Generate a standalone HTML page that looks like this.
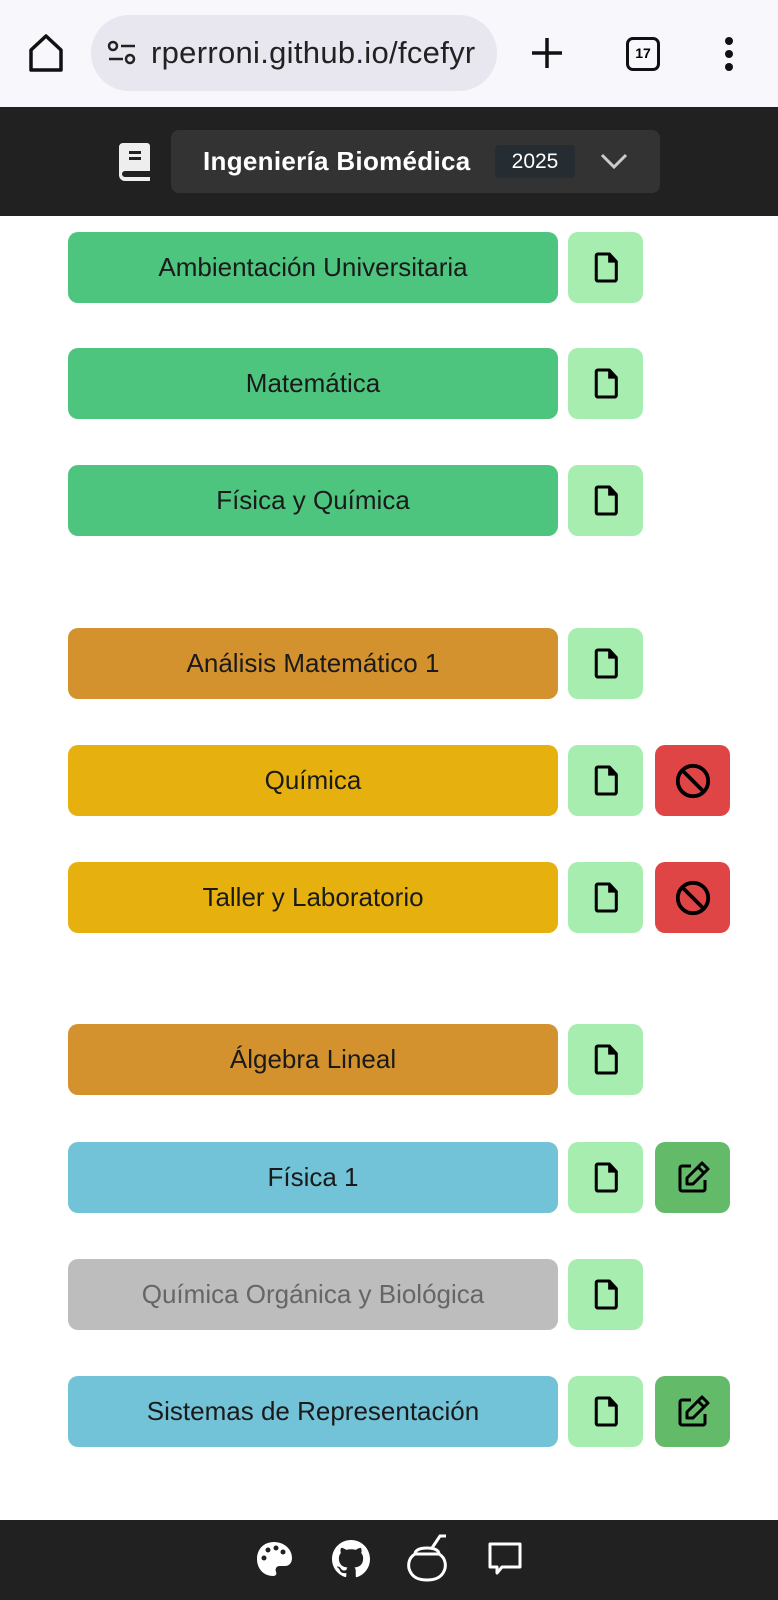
<!DOCTYPE html>
<html><head><meta charset="utf-8"><style>
*{margin:0;padding:0;box-sizing:border-box}
body{width:778px;height:1600px;background:#fff;font-family:"Liberation Sans",sans-serif;position:relative;overflow:hidden}
.top{position:absolute;left:0;top:0;width:778px;height:107px;background:#f7f7fc}
.pill{position:absolute;left:91px;top:15px;width:406px;height:76px;border-radius:38px;background:#e8e7ef;font-size:31px;color:#222;line-height:76px;padding-left:60px;white-space:nowrap;overflow:hidden;letter-spacing:0.3px}
.hdr{position:absolute;left:0;top:107px;width:778px;height:109px;background:#212121}
.sel{position:absolute;left:171px;top:130px;width:489px;height:63px;background:#333;border-radius:8px}
.row{position:absolute;left:68px;width:490px;height:71px;border-radius:10px;font-size:26px;color:#1a1a1a;text-align:center;line-height:71px}
.b{position:absolute;width:75px;height:71px;border-radius:10px;display:flex;align-items:center;justify-content:center}
.f{left:568px;background:#a8edb0}
.r{left:655px;background:#e04546}
.e{left:655px;background:#63bb6a}
.ftr{position:absolute;left:0;top:1520px;width:778px;height:80px;background:#212121}
</style></head><body>
<div class="top">
<svg style="position:absolute;left:28px;top:33px" width="36" height="40" viewBox="0 0 36 40"><path d="M18 3 L33 17 V37 H3 V17 Z" fill="none" stroke="#111" stroke-width="3.5" stroke-linejoin="round"/></svg>
<div class="pill">rperroni.github.io/fcefyr</div>
<svg style="position:absolute;left:107px;top:40px" width="30" height="26" viewBox="0 0 30 26"><circle cx="6" cy="6" r="4" fill="none" stroke="#222" stroke-width="2.5"/><line x1="14" y1="6" x2="28" y2="6" stroke="#222" stroke-width="2.5"/><line x1="2" y1="19" x2="16" y2="19" stroke="#222" stroke-width="2.5"/><circle cx="23" cy="19" r="4" fill="none" stroke="#222" stroke-width="2.5"/></svg>
<svg style="position:absolute;left:530px;top:36px" width="34" height="34"><path d="M17 2V32M2 17H32" stroke="#111" stroke-width="3.5"/></svg>
<div style="position:absolute;left:626px;top:37px;width:34px;height:34px;border:3.5px solid #111;border-radius:7px;font-size:14px;text-align:center;line-height:27px;font-weight:bold">17</div>
<svg style="position:absolute;left:724px;top:37px" width="10" height="34"><circle cx="5" cy="4" r="4" fill="#111"/><circle cx="5" cy="17" r="4" fill="#111"/><circle cx="5" cy="30" r="4" fill="#111"/></svg>
</div>
<div class="hdr"></div>
<svg style="position:absolute;left:117px;top:142px" width="36" height="40" viewBox="0 0 36 40"><path d="M6 1h24a3 3 0 0 1 3 3v25H8a3 3 0 0 0 0 6h25v4H8a6 6 0 0 1-6-6V5a4 4 0 0 1 4-4z" fill="#eee"/><rect x="12" y="9" width="12" height="3" fill="#212121"/><rect x="12" y="15" width="12" height="3" fill="#212121"/></svg>
<div class="sel">
<div style="position:absolute;left:32px;top:0;line-height:63px;color:#fff;font-weight:bold;font-size:26px;letter-spacing:0.3px">Ingeniería Biomédica</div>
<div style="position:absolute;left:324px;top:15px;width:80px;height:33px;background:#252d33;border-radius:4px;color:#fff;font-size:21px;text-align:center;line-height:33px">2025</div>
<svg style="position:absolute;left:428px;top:21px" width="30" height="20"><path d="M3 4L15 16L27 4" fill="none" stroke="#ccc" stroke-width="3"/></svg>
</div>

<div class="row" style="top:232px;background:#4dc57e">Ambientación Universitaria</div>
<div class="row" style="top:348px;background:#4dc57e">Matemática</div>
<div class="row" style="top:465px;background:#4dc57e">Física y Química</div>
<div class="row" style="top:628px;background:#d4922e">Análisis Matemático 1</div>
<div class="row" style="top:745px;background:#e6b10f">Química</div>
<div class="row" style="top:862px;background:#e6b10f">Taller y Laboratorio</div>
<div class="row" style="top:1024px;background:#d4922e">Álgebra Lineal</div>
<div class="row" style="top:1142px;background:#72c3d7">Física 1</div>
<div class="row" style="top:1259px;background:#bdbdbd;color:#666">Química Orgánica y Biológica</div>
<div class="row" style="top:1376px;background:#72c3d7">Sistemas de Representación</div>

<svg width="0" height="0" style="position:absolute"><defs>
<symbol id="doc" viewBox="0 0 24 30"><path d="M3 4a1.5 1.5 0 0 1 1.5-1.5H15l6.5 7v16.5a1.5 1.5 0 0 1-1.5 1.5H4.5A1.5 1.5 0 0 1 3 26z" fill="none" stroke="#000" stroke-width="2.8" stroke-linejoin="round"/><path d="M14 2.5v8h8z" fill="#000"/></symbol>
<symbol id="ban" viewBox="0 0 40 40"><circle cx="20" cy="20" r="16" fill="none" stroke="#000" stroke-width="4"/><path d="M9 9L31 31" stroke="#000" stroke-width="4"/></symbol>
<symbol id="pen" viewBox="0 0 36 36"><path d="M16 6H7a2 2 0 0 0-2 2v21a2 2 0 0 0 2 2h21a2 2 0 0 0 2-2V20" fill="none" stroke="#000" stroke-width="3" stroke-linejoin="round"/><path d="M27 3l6 6-15 15h-6v-6z" fill="none" stroke="#000" stroke-width="3" stroke-linejoin="round"/><path d="M23 7l6 6" stroke="#000" stroke-width="3"/></symbol>
</defs></svg>
<div class="b f" style="top:232px"><svg width="26" height="33"><use href="#doc"/></svg></div>
<div class="b f" style="top:348px"><svg width="26" height="33"><use href="#doc"/></svg></div>
<div class="b f" style="top:465px"><svg width="26" height="33"><use href="#doc"/></svg></div>
<div class="b f" style="top:628px"><svg width="26" height="33"><use href="#doc"/></svg></div>
<div class="b f" style="top:745px"><svg width="26" height="33"><use href="#doc"/></svg></div>
<div class="b r" style="top:745px"><svg width="38" height="38"><use href="#ban"/></svg></div>
<div class="b f" style="top:862px"><svg width="26" height="33"><use href="#doc"/></svg></div>
<div class="b r" style="top:862px"><svg width="38" height="38"><use href="#ban"/></svg></div>
<div class="b f" style="top:1024px"><svg width="26" height="33"><use href="#doc"/></svg></div>
<div class="b f" style="top:1142px"><svg width="26" height="33"><use href="#doc"/></svg></div>
<div class="b e" style="top:1142px"><svg width="36" height="36"><use href="#pen"/></svg></div>
<div class="b f" style="top:1259px"><svg width="26" height="33"><use href="#doc"/></svg></div>
<div class="b f" style="top:1376px"><svg width="26" height="33"><use href="#doc"/></svg></div>
<div class="b e" style="top:1376px"><svg width="36" height="36"><use href="#pen"/></svg></div>

<div class="ftr">
<svg style="position:absolute;left:255px;top:20px" width="38" height="38" viewBox="0 0 38 38"><path d="M19 2C9 2 2 9 2 19s7 17 16 17c3 0 4-2 3-4-1-3 0-6 4-6h5c4 0 7-3 7-8C37 9 29 2 19 2z" fill="#fff"/><circle cx="9" cy="18" r="2.5" fill="#212121"/><circle cx="13" cy="10" r="2.5" fill="#212121"/><circle cx="21" cy="8" r="2.5" fill="#212121"/><circle cx="28" cy="12" r="2.5" fill="#212121"/></svg>
<svg style="position:absolute;left:332px;top:20px" width="38" height="38" viewBox="0 0 16 16"><path fill="#fff" d="M8 0C3.58 0 0 3.58 0 8c0 3.540 2.290 6.530 5.470 7.590.4.07.55-.17.55-.38v-1.33c-2.230.48-2.7-1.070-2.7-1.070-.36-.92-.89-1.170-.89-1.170-.73-.5.05-.49.05-.49.8.06 1.230.83 1.230.83.71 1.220 1.870.87 2.330.66.07-.52.28-.87.51-1.070-1.780-.2-3.640-.89-3.640-3.950 0-.87.31-1.590.82-2.150-.08-.2-.36-1.020.08-2.120 0 0 .67-.21 2.200.82a7.600 7.600 0 0 1 4 0c1.530-1.040 2.200-.82 2.200-.82.44 1.100.16 1.920.08 2.120.51.56.82 1.270.82 2.150 0 3.070-1.870 3.750-3.650 3.950.29.25.54.73.54 1.480v2.200c0 .21.15.46.55.38A8 8 0 0 0 16 8c0-4.420-3.580-8-8-8z"/></svg>
<svg style="position:absolute;left:405px;top:12px" width="44" height="52" viewBox="0 0 44 52"><path d="M10 22c-7 4-8 13-4 19 3 5 9 7 16 7s13-2 16-7c4-6 3-15-4-19z" fill="none" stroke="#fff" stroke-width="3" stroke-linejoin="round"/><path d="M10 22c0-4 5-6 12-6s12 2 12 6" fill="none" stroke="#fff" stroke-width="3"/><path d="M27 16l8-12h6" fill="none" stroke="#fff" stroke-width="3"/></svg>
<svg style="position:absolute;left:487px;top:21px" width="36" height="36" viewBox="0 0 36 36"><path d="M3 3h30v23H15l-5 6v-6H3z" fill="none" stroke="#fff" stroke-width="3" stroke-linejoin="round"/></svg>
</div>
</body></html>
